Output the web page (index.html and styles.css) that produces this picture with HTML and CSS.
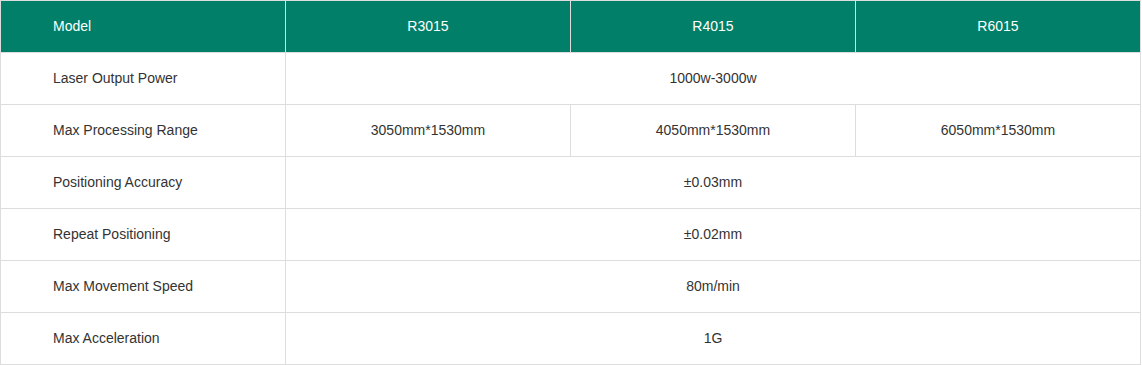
FILE: index.html
```html
<!DOCTYPE html>
<html>
<head>
<meta charset="utf-8">
<link rel="stylesheet" href="styles.css">
</head>
<body>
<table class="spec">
  <colgroup>
    <col class="c"><col class="c"><col class="c"><col class="c">
  </colgroup>
  <thead>
    <tr><th class="label">Model</th><th>R3015</th><th>R4015</th><th>R6015</th></tr>
  </thead>
  <tbody>
    <tr><td class="label">Laser Output Power</td><td colspan="3">1000w-3000w</td></tr>
    <tr><td class="label">Max Processing Range</td><td>3050mm*1530mm</td><td>4050mm*1530mm</td><td>6050mm*1530mm</td></tr>
    <tr><td class="label">Positioning Accuracy</td><td colspan="3">±0.03mm</td></tr>
    <tr><td class="label">Repeat Positioning</td><td colspan="3">±0.02mm</td></tr>
    <tr><td class="label">Max Movement Speed</td><td colspan="3">80m/min</td></tr>
    <tr><td class="label">Max Acceleration</td><td colspan="3">1G</td></tr>
  </tbody>
</table>
</body>
</html>
```
FILE: styles.css
```css
html, body { margin: 0; padding: 0; background: #fff; }
body { font-family: "Liberation Sans", Arial, sans-serif; font-size: 14px; color: #333; }
.spec { border-collapse: collapse; table-layout: fixed; width: 1141px; }
.spec .c { width: 285px; }
.spec th, .spec td {
  border: 1px solid #dddddd;
  height: 52px;
  padding: 0 0 2px 0;
  text-align: center;
  font-weight: normal;
  box-sizing: border-box;
}
.spec th { background: #017f69; color: #fff; }
.spec .label { text-align: left; padding-left: 52px; }
```
